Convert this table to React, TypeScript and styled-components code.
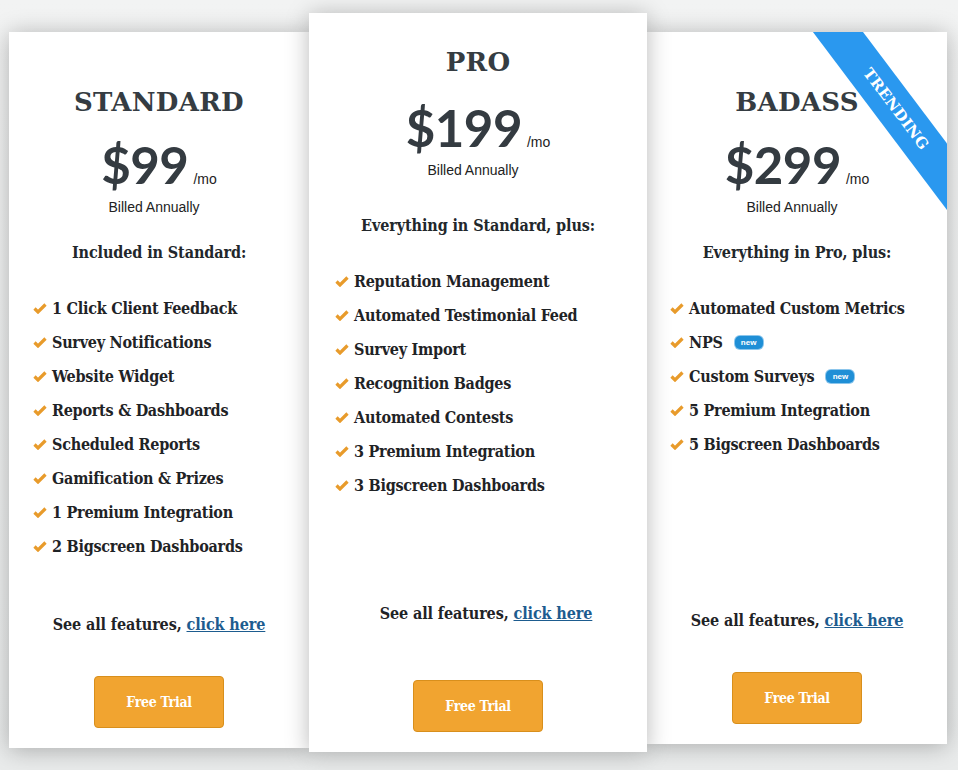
import React from "react";
import styled, { createGlobalStyle } from "styled-components";

const Global = createGlobalStyle`
  html, body { margin: 0; padding: 0; background: #eceeee; }
  body { width: 958px; height: 770px; overflow: hidden; }
`;

const SLAB = `"DejaVu Serif Condensed", "DejaVu Serif", serif`;

const Page = styled.div`
  display: flex;
  align-items: flex-start;
  padding-left: 9px;
  height: 770px;
  box-sizing: border-box;
  background: linear-gradient(#f2f3f3, #e9ebeb);
`;

const Card = styled.div<{ $top: number; $h: number; $w: number; $pt: number; $z: number }>`
  position: relative;
  z-index: ${(p) => p.$z};
  margin-top: ${(p) => p.$top}px;
  width: ${(p) => p.$w}px;
  height: ${(p) => p.$h}px;
  padding-top: ${(p) => p.$pt}px;
  box-sizing: border-box;
  background: #fff;
  display: flex;
  flex-direction: column;
  overflow: hidden;
  box-shadow: 0 2px 22px rgba(0, 0, 0, 0.28);
`;

const Title = styled.h2`
  margin: 0;
  font-family: "DejaVu Serif", serif;
  font-weight: 700;
  font-size: 26px;
  line-height: 36px;
  letter-spacing: 0.3px;
  text-align: center;
  color: #353c42;
`;

const PriceRow = styled.div<{ $gap: number }>`
  margin-top: ${(p) => p.$gap}px;
  display: flex;
  justify-content: center;
  align-items: baseline;
  gap: 5px;
  height: 56px;
  line-height: 56px;
`;

const Amount = styled.span`
  font-family: Lato, "Open Sans", sans-serif;
  font-weight: 700;
  font-size: 51px;
  color: #343b41;
  letter-spacing: -0.5px;
`;

const Per = styled.span`
  font-family: "Liberation Sans", Arial, sans-serif;
  font-size: 14px;
  color: #222;
`;

const Billed = styled.div`
  margin-top: 5px;
  padding-right: 10px;
  font-family: "Liberation Sans", Arial, sans-serif;
  font-size: 14px;
  line-height: 18px;
  color: #222;
  text-align: center;
`;

const Sub = styled.div<{ $gap: number }>`
  margin-top: ${(p) => p.$gap}px;
  font-family: ${SLAB};
  font-stretch: condensed;
  font-weight: 700;
  font-size: 16px;
  line-height: 22px;
  letter-spacing: -0.1px;
  text-align: center;
  color: #22272b;
`;

const List = styled.ul<{ $pl: number }>`
  list-style: none;
  margin: 27px 0 0;
  padding: 0 0 0 ${(p) => p.$pl}px;
`;

const Item = styled.li`
  display: flex;
  align-items: center;
  height: 34px;
  font-family: ${SLAB};
  font-stretch: condensed;
  font-weight: 700;
  font-size: 16px;
  letter-spacing: -0.25px;
  color: #1f2326;
  svg { flex: none; margin-right: 5px; margin-top: 1px; }
`;

const NewBadge = styled.span`
  display: inline-flex;
  align-items: center;
  justify-content: center;
  margin-left: 12px;
  width: 28px;
  height: 13px;
  border-radius: 5px;
  background: #1f8fd6;
  box-shadow: 0 0 0 1px #8cc6ec;
  font-family: "Liberation Sans", Arial, sans-serif;
  font-size: 8px;
  font-weight: 700;
  letter-spacing: 0;
  color: #fff;
`;

const Footer = styled.div<{ $gap: number }>`
  margin-top: auto;
  padding-bottom: 20px;
  display: flex;
  flex-direction: column;
  align-items: center;
  gap: ${(p) => p.$gap}px;
`;

const SeeAll = styled.div<{ $shift: number }>`
  padding-left: ${(p) => p.$shift}px;
  font-family: ${SLAB};
  font-stretch: condensed;
  font-weight: 700;
  font-size: 16px;
  line-height: 22px;
  letter-spacing: -0.1px;
  color: #1f2326;
  a { color: #1d5c8f; text-decoration: underline; }
`;

const TrialButton = styled.button`
  width: 130px;
  height: 52px;
  border: 1px solid #d88f1c;
  border-radius: 4px;
  background: #f1a430;
  color: #fff;
  font-family: ${SLAB};
  font-stretch: condensed;
  font-weight: 700;
  font-size: 14px;
  letter-spacing: -0.3px;
  cursor: pointer;
`;

const Ribbon = styled.div`
  position: absolute;
  left: 99px;
  top: 57px;
  width: 300px;
  height: 40px;
  background: #2a98ef;
  transform: rotate(53deg);
  display: flex;
  align-items: center;
  justify-content: center;
  font-family: "DejaVu Serif", serif;
  font-weight: 700;
  font-size: 15px;
  letter-spacing: 0.3px;
  color: #fff;
`;

const Check = () => (
  <svg width="14" height="11" viewBox="0 0 14 11">
    <path d="M1.5 5.5 L5 9 L12.5 1.5" fill="none" stroke="#e89b2b" strokeWidth="3.2" strokeLinejoin="miter" />
  </svg>
);

type Feat = { t: string; isNew?: boolean };

type Plan = {
  name: string;
  price: string;
  sub: string;
  feats: Feat[];
  top: number;
  h: number;
  w: number;
  pt: number;
  priceGap: number;
  subGap: number;
  footGap: number;
  seeShift: number;
  pl: number;
  z: number;
  ribbon?: boolean;
};

const plans: Plan[] = [
  {
    name: "STANDARD",
    price: "$99",
    sub: "Included in Standard:",
    feats: [
      { t: "1 Click Client Feedback" },
      { t: "Survey Notifications" },
      { t: "Website Widget" },
      { t: "Reports & Dashboards" },
      { t: "Scheduled Reports" },
      { t: "Gamification & Prizes" },
      { t: "1 Premium Integration" },
      { t: "2 Bigscreen Dashboards" },
    ],
    top: 32, h: 716, w: 300, pt: 52, priceGap: 17, subGap: 26, footGap: 40, seeShift: 0, pl: 24, z: 1,
  },
  {
    name: "PRO",
    price: "$199",
    sub: "Everything in Standard, plus:",
    feats: [
      { t: "Reputation Management" },
      { t: "Automated Testimonial Feed" },
      { t: "Survey Import" },
      { t: "Recognition Badges" },
      { t: "Automated Contests" },
      { t: "3 Premium Integration" },
      { t: "3 Bigscreen Dashboards" },
    ],
    top: 13, h: 739, w: 338, pt: 31, priceGap: 20, subGap: 36, footGap: 55, seeShift: 16, pl: 26, z: 3,
  },
  {
    name: "BADASS",
    price: "$299",
    sub: "Everything in Pro, plus:",
    feats: [
      { t: "Automated Custom Metrics" },
      { t: "NPS", isNew: true },
      { t: "Custom Surveys", isNew: true },
      { t: "5 Premium Integration" },
      { t: "5 Bigscreen Dashboards" },
    ],
    top: 32, h: 712, w: 300, pt: 52, priceGap: 17, subGap: 26, footGap: 40, seeShift: 0, pl: 23, z: 2, ribbon: true,
  },
];

export default function App() {
  return (
    <>
      <Global />
      <Page>
        {plans.map((p) => (
          <Card key={p.name} $top={p.top} $h={p.h} $w={p.w} $pt={p.pt} $z={p.z}>
            {p.ribbon && <Ribbon>TRENDING</Ribbon>}
            <Title>{p.name}</Title>
            <PriceRow $gap={p.priceGap}>
              <Amount>{p.price}</Amount>
              <Per>/mo</Per>
            </PriceRow>
            <Billed>Billed Annually</Billed>
            <Sub $gap={p.subGap}>{p.sub}</Sub>
            <List $pl={p.pl}>
              {p.feats.map((f) => (
                <Item key={f.t}>
                  <Check />
                  {f.t}
                  {f.isNew && <NewBadge>new</NewBadge>}
                </Item>
              ))}
            </List>
            <Footer $gap={p.footGap}>
              <SeeAll $shift={p.seeShift}>
                See all features, <a href="#">click here</a>
              </SeeAll>
              <TrialButton>Free Trial</TrialButton>
            </Footer>
          </Card>
        ))}
      </Page>
    </>
  );
}
